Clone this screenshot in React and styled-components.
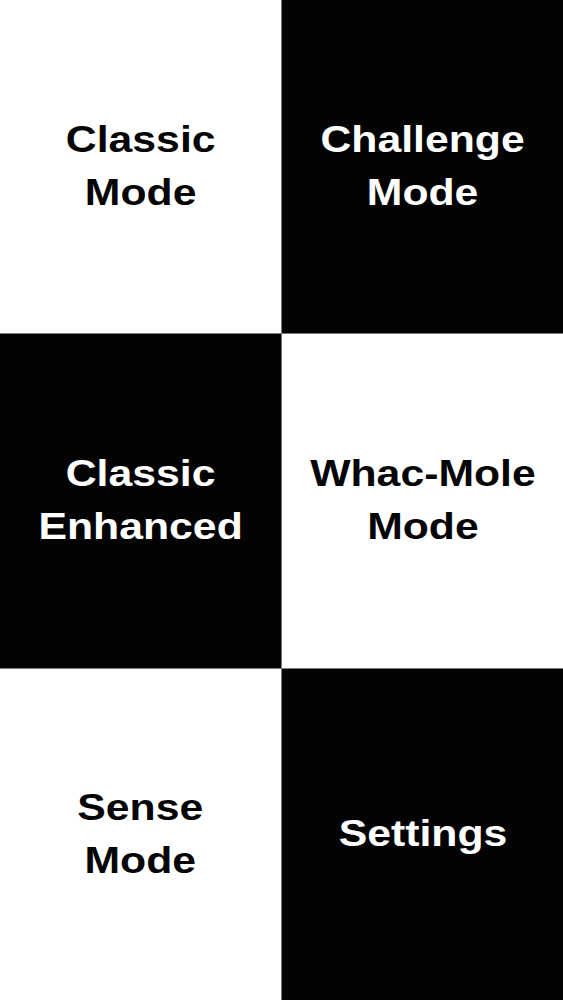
import React from 'react';
import styled, { createGlobalStyle } from 'styled-components';

const GlobalStyle = createGlobalStyle`
  html, body {
    margin: 0;
    padding: 0;
    background: #fff;
  }
  * {
    box-sizing: border-box;
  }
`;

const Board = styled.div`
  width: 563px;
  height: 1000px;
  display: grid;
  grid-template-columns: 281px 1fr;
  grid-template-rows: 333px 334px 1fr;
  gap: 1px;
  background: #7a7a7a;
  overflow: hidden;
`;

const Tile = styled.button`
  border: none;
  margin: 0;
  padding: 0 0 2px;
  display: flex;
  align-items: center;
  justify-content: center;
  background: ${p => (p.dark ? '#030303' : '#fff')};
  color: ${p => (p.dark ? '#fff' : '#050505')};
  cursor: pointer;
`;

const Label = styled.span`
  display: inline-block;
  font-family: 'Liberation Sans', Arial, Helvetica, sans-serif;
  font-weight: 700;
  font-size: 37.5px;
  line-height: 53px;
  text-align: center;
  transform: scaleX(1.14);
  white-space: pre-line;
`;

const modes = [
  { label: 'Classic\nMode', dark: false },
  { label: 'Challenge\nMode', dark: true },
  { label: 'Classic\nEnhanced', dark: true },
  { label: 'Whac-Mole\nMode', dark: false },
  { label: 'Sense\nMode', dark: false },
  { label: 'Settings', dark: true },
];

const App = () => (
  <>
    <GlobalStyle />
    <Board>
      {modes.map(m => (
        <Tile key={m.label} dark={m.dark}>
          <Label>{m.label}</Label>
        </Tile>
      ))}
    </Board>
  </>
);

export default App;
